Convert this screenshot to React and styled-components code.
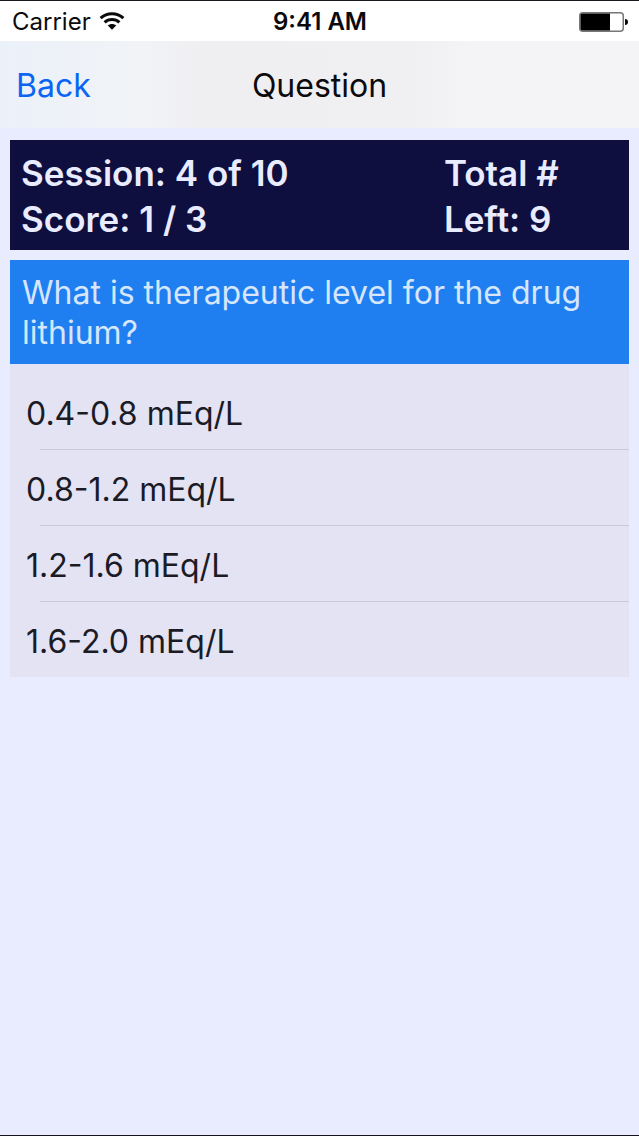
import React, { useState } from "react";
import styled, { createGlobalStyle } from "styled-components";

const GlobalStyle = createGlobalStyle`
  * {
    box-sizing: border-box;
  }

  body {
    margin: 0;
    background-color: #e9ebff;
    font-family: Inter, "Liberation Sans", sans-serif;
  }

  button {
    margin: 0;
    border: 0;
    background: none;
    font-family: inherit;
    cursor: pointer;
  }
`;

const Screen = styled.div`
  display: flex;
  flex-direction: column;
  min-height: 100vh;
  border-top: 1px solid #1a161d;
  border-bottom: 1px solid #14121f;
`;

// status bar
const StatusBar = styled.div`
  display: grid;
  grid-template-columns: 1fr auto 1fr;
  align-items: center;
  height: 40px;
  padding: 1px 11px 0 12px;
  background-color: #ffffff;
  color: #0b0b0d;
  font-size: 24px;
  line-height: 29px;
`;

const Carrier = styled.div`
  display: flex;
  align-items: center;
  gap: 8px;
`;

const Clock = styled.time`
  font-weight: 600;
`;

const Battery = styled.svg`
  justify-self: end;
`;

// navigation bar
const NavBar = styled.header`
  display: grid;
  grid-template-columns: 1fr auto 1fr;
  align-items: center;
  height: 87px;
  padding: 2px 16px 0;
  background: linear-gradient(
    to right,
    #ebf1fa 0%,
    #f1f3f6 22%,
    #efeef1 34%,
    #f0eff1 64%,
    #f4f3f6 74%,
    #f4f3f6 100%
  );
`;

const BackButton = styled.button`
  justify-self: start;
  padding: 0;
  color: #0a66f2;
  font-size: 32px;
  line-height: 40px;
`;

const Title = styled.h1`
  margin: 0;
  color: #0b0b0d;
  font-size: 32px;
  font-weight: 400;
  line-height: 40px;
`;

const Content = styled.main`
  display: flex;
  flex-direction: column;
  padding: 12px 10px 0;
`;

const ScorePanel = styled.section`
  display: grid;
  grid-template-columns: 17fr 7fr;
  padding: 10px 11px 8px;
  background-color: #0e0e3f;
  color: #e9ebff;
  font-size: 35px;
  font-weight: 600;
  line-height: 46px;
`;

const ScoreLine = styled.div`
  white-space: nowrap;
`;

const Question = styled.h2`
  margin: 10px 0 0;
  padding: 13px 12px 11px;
  background-color: #1f7ff0;
  color: #d6e6fd;
  font-size: 32px;
  font-weight: 400;
  line-height: 40px;
`;

const AnswerList = styled.ul`
  margin: 0;
  padding: 10px 0 0;
  background-color: #e3e3f3;
  list-style: none;
`;

const AnswerItem = styled.li`
  & + &::before {
    content: "";
    display: block;
    height: 1px;
    margin-left: 30px;
    background-color: #c9c9da;
  }
`;

const AnswerButton = styled.button`
  display: block;
  width: 100%;
  height: 75px;
  padding: 4px 16px 0;
  color: ${(props) => (props.$selected ? "#0a66f2" : "#1b1b26")};
  font-size: 32px;
  line-height: 40px;
  text-align: left;
`;

const answers = [
  "0.4-0.8 mEq/L",
  "0.8-1.2 mEq/L",
  "1.2-1.6 mEq/L",
  "1.6-2.0 mEq/L",
];

function WifiIcon() {
  return (
    <svg width="26" height="19" viewBox="0 0 26 19" aria-hidden="true">
      <g fill="none" stroke="#0b0b0d" strokeWidth="3">
        <path d="M1.6 6.2C8 0.2 18 0.2 24.4 6.2" />
        <path d="M5.6 10.4C9.8 6.6 16.2 6.6 20.4 10.4" />
      </g>
      <path d="M8.8 13.6C11.2 11.6 14.8 11.6 17.2 13.6L13 17.8Z" fill="#0b0b0d" />
    </svg>
  );
}

function BatteryIcon() {
  return (
    <Battery width="49" height="20" viewBox="0 0 49 20" aria-hidden="true">
      <rect x="0.75" y="0.75" width="43.5" height="18.5" rx="3" fill="#fff" stroke="#77777a" strokeWidth="1.5" />
      <path d="M3.5 1.5H31V18.5H3.5Q1.5 18.5 1.5 16.5V3.5Q1.5 1.5 3.5 1.5Z" fill="#000" />
      <path d="M46 7Q49 7 49 10Q49 13 46 13Z" fill="#0b0b0d" />
    </Battery>
  );
}

function App() {
  const [Selected, setSelected] = useState("");

  return (
    <Screen>
      <GlobalStyle />
      <StatusBar>
        <Carrier>
          Carrier
          <WifiIcon />
        </Carrier>
        <Clock>9:41 AM</Clock>
        <BatteryIcon />
      </StatusBar>

      <NavBar>
        <BackButton type="button">Back</BackButton>
        <Title>Question</Title>
      </NavBar>

      <Content>
        <ScorePanel>
          <div>
            <ScoreLine>Session: 4 of 10</ScoreLine>
            <ScoreLine>Score: 1 / 3</ScoreLine>
          </div>
          <div>
            <ScoreLine>Total #</ScoreLine>
            <ScoreLine>Left: 9</ScoreLine>
          </div>
        </ScorePanel>

        <Question>What is therapeutic level for the drug lithium?</Question>

        <AnswerList>
          {answers.map((answer) => (
            <AnswerItem key={answer}>
              <AnswerButton
                type="button"
                $selected={Selected === answer}
                onClick={() => setSelected(answer)}
              >
                {answer}
              </AnswerButton>
            </AnswerItem>
          ))}
        </AnswerList>
      </Content>
    </Screen>
  );
}

export default App;
